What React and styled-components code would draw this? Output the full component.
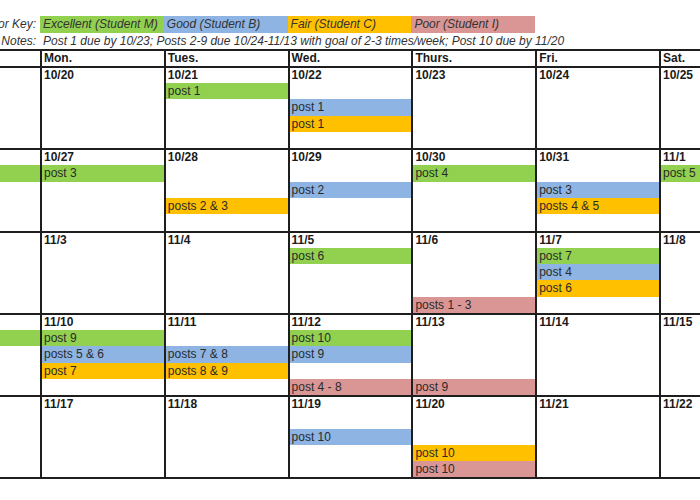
import styled, { createGlobalStyle } from 'styled-components';

const GlobalStyle = createGlobalStyle`
  html, body {
    margin: 0;
    padding: 0;
    background: #fff;
    overflow: hidden;
  }
  body {
    font-family: "Liberation Sans", Arial, sans-serif;
  }
`;

const tones = {
    green: '#92d050',
    blue: '#8db4e2',
    orange: '#ffc000',
    red: '#da9694',
};

const COL = 123.8;

const legend = [
    { tone: 'green', label: 'Excellent (Student M)' },
    { tone: 'blue', label: 'Good (Student B)' },
    { tone: 'orange', label: 'Fair (Student C)' },
    { tone: 'red', label: 'Poor (Student I)' },
];

const dayNames = ['Sun.', 'Mon.', 'Tues.', 'Wed.', 'Thurs.', 'Fri.', 'Sat.'];

// slot: 1..4 under the date line
const weeks = [
    [
        { date: '10/19', posts: [] },
        { date: '10/20', posts: [] },
        { date: '10/21', posts: [{ slot: 1, tone: 'green', text: 'post 1' }] },
        { date: '10/22', posts: [{ slot: 2, tone: 'blue', text: 'post 1' }, { slot: 3, tone: 'orange', text: 'post 1' }] },
        { date: '10/23', posts: [] },
        { date: '10/24', posts: [] },
        { date: '10/25', posts: [] },
    ],
    [
        { date: '10/26', posts: [{ slot: 1, tone: 'green', text: 'post 2' }] },
        { date: '10/27', posts: [{ slot: 1, tone: 'green', text: 'post 3' }] },
        { date: '10/28', posts: [{ slot: 3, tone: 'orange', text: 'posts 2 & 3' }] },
        { date: '10/29', posts: [{ slot: 2, tone: 'blue', text: 'post 2' }] },
        { date: '10/30', posts: [{ slot: 1, tone: 'green', text: 'post 4' }] },
        { date: '10/31', posts: [{ slot: 2, tone: 'blue', text: 'post 3' }, { slot: 3, tone: 'orange', text: 'posts 4 & 5' }] },
        { date: '11/1', posts: [{ slot: 1, tone: 'green', text: 'post 5' }] },
    ],
    [
        { date: '11/2', posts: [] },
        { date: '11/3', posts: [] },
        { date: '11/4', posts: [] },
        { date: '11/5', posts: [{ slot: 1, tone: 'green', text: 'post 6' }] },
        { date: '11/6', posts: [{ slot: 4, tone: 'red', text: 'posts 1 - 3' }] },
        { date: '11/7', posts: [
            { slot: 1, tone: 'green', text: 'post 7' },
            { slot: 2, tone: 'blue', text: 'post 4' },
            { slot: 3, tone: 'orange', text: 'post 6' },
        ] },
        { date: '11/8', posts: [] },
    ],
    [
        { date: '11/9', posts: [{ slot: 1, tone: 'green', text: 'post 8' }] },
        { date: '11/10', posts: [
            { slot: 1, tone: 'green', text: 'post 9' },
            { slot: 2, tone: 'blue', text: 'posts 5 & 6' },
            { slot: 3, tone: 'orange', text: 'post 7' },
        ] },
        { date: '11/11', posts: [{ slot: 2, tone: 'blue', text: 'posts 7 & 8' }, { slot: 3, tone: 'orange', text: 'posts 8 & 9' }] },
        { date: '11/12', posts: [
            { slot: 1, tone: 'green', text: 'post 10' },
            { slot: 2, tone: 'blue', text: 'post 9' },
            { slot: 4, tone: 'red', text: 'post 4 - 8' },
        ] },
        { date: '11/13', posts: [{ slot: 4, tone: 'red', text: 'post 9' }] },
        { date: '11/14', posts: [] },
        { date: '11/15', posts: [] },
    ],
    [
        { date: '11/16', posts: [] },
        { date: '11/17', posts: [] },
        { date: '11/18', posts: [] },
        { date: '11/19', posts: [{ slot: 2, tone: 'blue', text: 'post 10' }] },
        { date: '11/20', posts: [{ slot: 3, tone: 'orange', text: 'post 10' }, { slot: 4, tone: 'red', text: 'post 10' }] },
        { date: '11/21', posts: [] },
        { date: '11/22', posts: [] },
    ],
];

const Sheet = styled.div`
  padding-top: 16px;
  margin-left: -83.8px;
  width: ${7 * COL + 2}px;
  font-size: 12px;
  color: #222;
`;

const InfoRow = styled.div`
  display: grid;
  grid-template-columns: repeat(7, ${COL}px);
  height: ${props => props.h}px;
  line-height: ${props => props.h}px;
  font-style: italic;
  color: #333;
`;

const RowLabel = styled.div`
  text-align: right;
  padding-right: 4px;
  white-space: nowrap;
`;

const Swatch = styled.div`
  background: ${props => tones[props.tone]};
  padding-left: 3px;
  white-space: nowrap;
  overflow: hidden;
`;

const NoteText = styled.div`
  grid-column: 2 / 8;
  padding-left: 3px;
  white-space: nowrap;
`;

const Calendar = styled.div`
  display: grid;
  grid-template-columns: repeat(7, ${COL - 2}px);
  grid-template-rows: 15px repeat(5, 80.3px);
  gap: 2px;
  border: 2px solid #1e1e1e;
  background: #1e1e1e;
`;

const DayHead = styled.div`
  background: #fff;
  font-weight: bold;
  line-height: 15px;
  padding-left: 2px;
  white-space: nowrap;
  color: #1a1a1a;
`;

const DayCell = styled.div`
  background: #fff;
  display: grid;
  grid-template-rows: 15px repeat(4, 1fr);
  overflow: hidden;
`;

const DateLabel = styled.div`
  grid-row: 1;
  font-weight: bold;
  line-height: 15px;
  padding-left: 2px;
  color: #1a1a1a;
`;

const Entry = styled.div`
  grid-row: ${props => props.slot + 1};
  background: ${props => tones[props.tone]};
  display: flex;
  align-items: center;
  padding-left: 2px;
  white-space: nowrap;
  color: #2a2a2a;
`;

const App = () => (
    <>
        <GlobalStyle />
        <Sheet>
            <InfoRow h={17}>
                <RowLabel>Color Key:</RowLabel>
                {legend.map(item => (
                    <Swatch key={item.tone} tone={item.tone}>{item.label}</Swatch>
                ))}
            </InfoRow>
            <InfoRow h={16}>
                <RowLabel>Notes:</RowLabel>
                <NoteText>
                    Post 1 due by 10/23; Posts 2-9 due 10/24-11/13 with goal of 2-3 times/week; Post 10 due by 11/20
                </NoteText>
            </InfoRow>
            <Calendar>
                {dayNames.map(name => (
                    <DayHead key={name}>{name}</DayHead>
                ))}
                {weeks.map(week =>
                    week.map(day => (
                        <DayCell key={day.date}>
                            <DateLabel>{day.date}</DateLabel>
                            {day.posts.map(p => (
                                <Entry key={p.slot} slot={p.slot} tone={p.tone}>{p.text}</Entry>
                            ))}
                        </DayCell>
                    ))
                )}
            </Calendar>
        </Sheet>
    </>
);

export default App;
